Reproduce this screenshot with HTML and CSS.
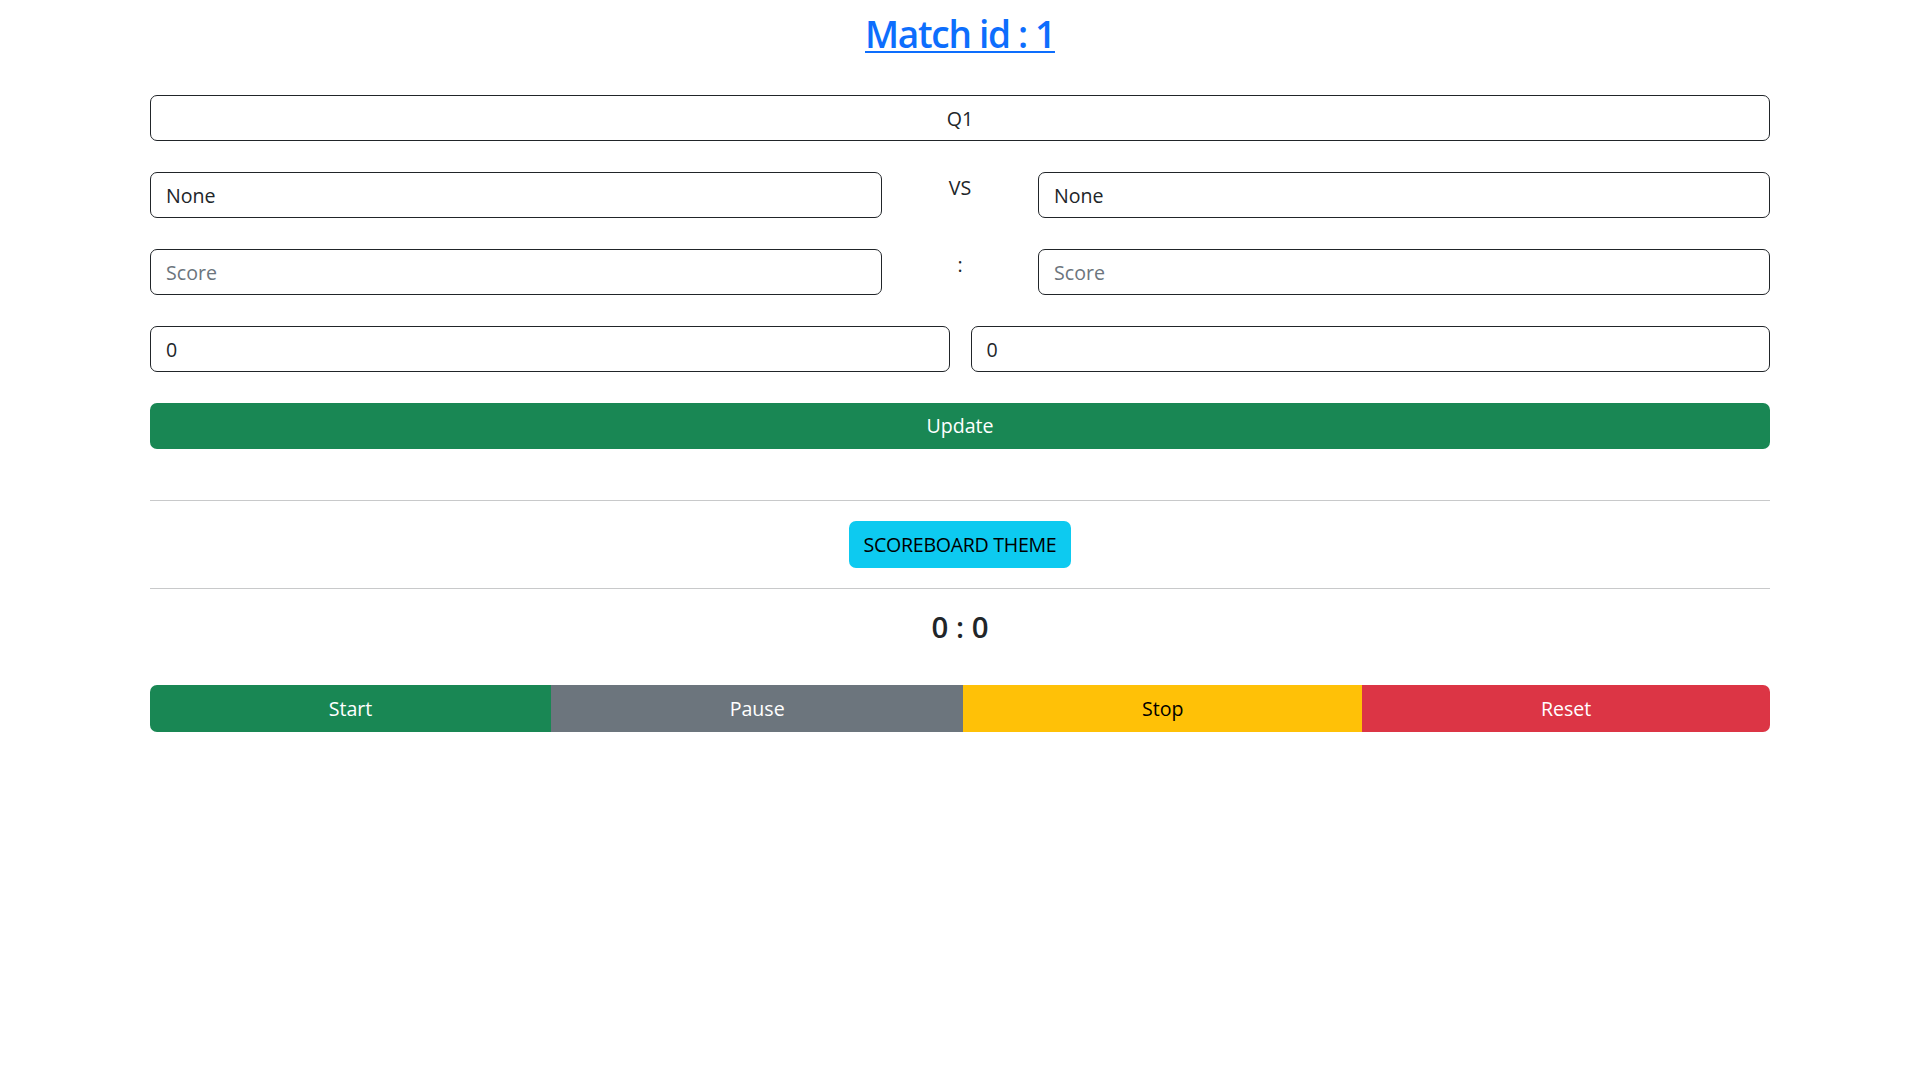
FILE: index.html
```html
<!DOCTYPE html>
<html lang="en">
<head>
<meta charset="utf-8">
<title>Match id : 1</title>
<link rel="stylesheet" href="styles.css">
</head>
<body>
<div class="page">
  <h2 class="title"><a href="#" class="title-link">Match id : 1</a></h2>

  <form class="match-form">
    <input class="field field-center" type="text" value="Q1">

    <div class="triple-row">
      <input class="field" type="text" value="None">
      <div class="sep">VS</div>
      <input class="field" type="text" value="None">
    </div>

    <div class="triple-row">
      <input class="field" type="text" placeholder="Score">
      <div class="sep">:</div>
      <input class="field" type="text" placeholder="Score">
    </div>

    <div class="double-row">
      <input class="field" type="text" value="0">
      <input class="field" type="text" value="0">
    </div>

    <button type="button" class="btn btn-success btn-block">Update</button>
  </form>

  <hr class="rule rule-first">
  <div class="theme-wrap">
    <button type="button" class="btn btn-info">SCOREBOARD THEME</button>
  </div>
  <hr class="rule">

  <h4 class="score">0 : 0</h4>

  <div class="btn-group">
    <button type="button" class="btn btn-success">Start</button>
    <button type="button" class="btn btn-secondary">Pause</button>
    <button type="button" class="btn btn-warning">Stop</button>
    <button type="button" class="btn btn-danger">Reset</button>
  </div>
</div>
</body>
</html>
```

FILE: styles.css
```css
* {
  box-sizing: border-box;
}

body {
  margin: 0;
  font-family: "Segoe UI", "Open Sans", "Noto Sans", sans-serif;
  font-size: 19.6px;
  line-height: 1.5;
  color: #212529;
  background: #fff;
}

.page {
  padding: 0 150px;
}

.title {
  margin: 0;
  padding-top: 12px;
  height: 56px;
  text-align: center;
  font-size: 37px;
  font-weight: 600;
  line-height: 1.2;
  letter-spacing: -1.3px;
}

.title-link {
  color: #0d6efd;
  text-decoration: underline;
  text-decoration-thickness: 2px;
  text-underline-offset: 3px;
}

.match-form {
  margin-top: 39px;
  display: flex;
  flex-direction: column;
  gap: 31px;
}

.field {
  display: block;
  width: 100%;
  height: 46px;
  padding: 1px 15px 0;
  font-family: inherit;
  font-size: 19.6px;
  line-height: 1.5;
  color: #212529;
  background: #fff;
  border: 1px solid #212529;
  border-radius: 7px;
  outline: none;
}

.field::placeholder {
  color: #6c757d;
  opacity: 1;
}

.field-center {
  text-align: center;
}

.triple-row {
  display: grid;
  grid-template-columns: 1fr 156px 1fr;
}

.sep {
  text-align: center;
  line-height: 1.5;
  padding-top: 1px;
}

.double-row {
  display: grid;
  grid-template-columns: 1fr 1fr;
  gap: 21px;
}

.btn {
  display: inline-flex;
  align-items: center;
  justify-content: center;
  height: 47px;
  padding: 0 15px;
  font-family: inherit;
  font-size: 19.6px;
  line-height: 1.5;
  border: 0;
  border-radius: 7px;
  cursor: pointer;
  white-space: nowrap;
}

.btn-block {
  width: 100%;
  height: 46px;
}

.btn-success {
  background: #198754;
  color: #fff;
}

.btn-secondary {
  background: #6c757d;
  color: #fff;
}

.btn-warning {
  background: #ffc107;
  color: #000;
}

.btn-danger {
  background: #dc3545;
  color: #fff;
}

.btn-info {
  background: #0dcaf0;
  color: #000;
  letter-spacing: -0.3px;
}

.rule {
  margin: 0;
  border: 0;
  border-top: 1px solid #c8c9ca;
}

.rule-first {
  margin-top: 51px;
}

.theme-wrap {
  display: flex;
  justify-content: center;
  padding: 20px 0;
}

.score {
  margin: 21px 0 0;
  text-align: center;
  font-size: 29.4px;
  font-weight: 600;
  line-height: 1.2;
}

.btn-group {
  display: flex;
  margin-top: 40px;
}

.btn-group .btn {
  flex: 1 1 auto;
  border-radius: 0;
}

.btn-group .btn:first-child {
  border-radius: 7px 0 0 7px;
}

.btn-group .btn:last-child {
  border-radius: 0 7px 7px 0;
}
```
